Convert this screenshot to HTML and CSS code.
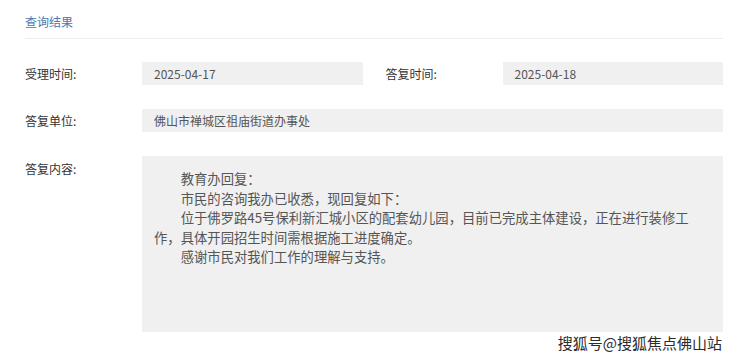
FILE: index.html
```html
<!DOCTYPE html>
<html lang="zh-CN">
<head>
  <meta charset="UTF-8">
  <meta name="viewport" content="width=device-width, initial-scale=1.0">
  <link rel="stylesheet" href="styles.css">
  <title>查询结果</title>
</head>
<body>
  <div class="result-panel">
    <div class="panel-title">查询结果</div>

    <div class="form-row">
      <label class="field-label">受理时间:</label>
      <div class="field-value">2025-04-17</div>
      <label class="field-label second">答复时间:</label>
      <div class="field-value">2025-04-18</div>
    </div>

    <div class="form-row">
      <label class="field-label">答复单位:</label>
      <div class="field-value">佛山市禅城区祖庙街道办事处</div>
    </div>

    <div class="form-row top">
      <label class="field-label">答复内容:</label>
      <div class="field-value content">
        <p>教育办回复：</p>
        <p>市民的咨询我办已收悉，现回复如下：</p>
        <p>位于佛罗路45号保利新汇城小区的配套幼儿园，目前已完成主体建设，正在进行装修工<br>作，具体开园招生时间需根据施工进度确定。</p>
        <p>感谢市民对我们工作的理解与支持。</p>
      </div>
    </div>

    <div class="watermark">搜狐号@搜狐焦点佛山站</div>
  </div>
</body>
</html>
```

FILE: styles.css
```css
body {
  margin: 0;
  background-color: #ffffff;
  font-family: "Noto Sans CJK SC", "Noto Sans", sans-serif;
  font-size: 12px;
  color: #333;
}

.result-panel {
  position: relative;
  height: 359px;
  padding: 0 17px 0 25px;
  box-sizing: border-box;
}

.panel-title {
  padding-top: 12px;
  padding-bottom: 6px;
  line-height: 20px;
  font-size: 12px;
  color: #4a78b0;
  border-bottom: 1px solid #eeeeee;
  margin-bottom: 23px;
}

.form-row {
  display: flex;
  align-items: center;
  margin-bottom: 24px;
}

.form-row.top {
  align-items: flex-start;
}

.field-label {
  width: 117px;
  flex-shrink: 0;
  line-height: 23px;
  color: #333;
}

.form-row.top .field-label {
  margin-top: 1px;
}

.field-label.second {
  margin-left: 23px;
}

.field-value {
  flex: 1;
  height: 23px;
  line-height: 23px;
  padding: 0 12px;
  background-color: #f0f0f0;
  color: #555;
}

.field-value.content {
  height: 176px;
  box-sizing: border-box;
  padding: 13px 20px 0 12px;
  font-size: 13.33px;
  line-height: 19.6px;
}

.content p {
  margin: 0;
  text-indent: 2em;
}

.watermark {
  position: absolute;
  right: 18px;
  bottom: 7px;
  font-size: 15px;
  line-height: 18px;
  color: #2b2b2b;
  text-shadow: 1px 0 #fff, -1px 0 #fff, 0 1px #fff, 0 -1px #fff;
}
```
